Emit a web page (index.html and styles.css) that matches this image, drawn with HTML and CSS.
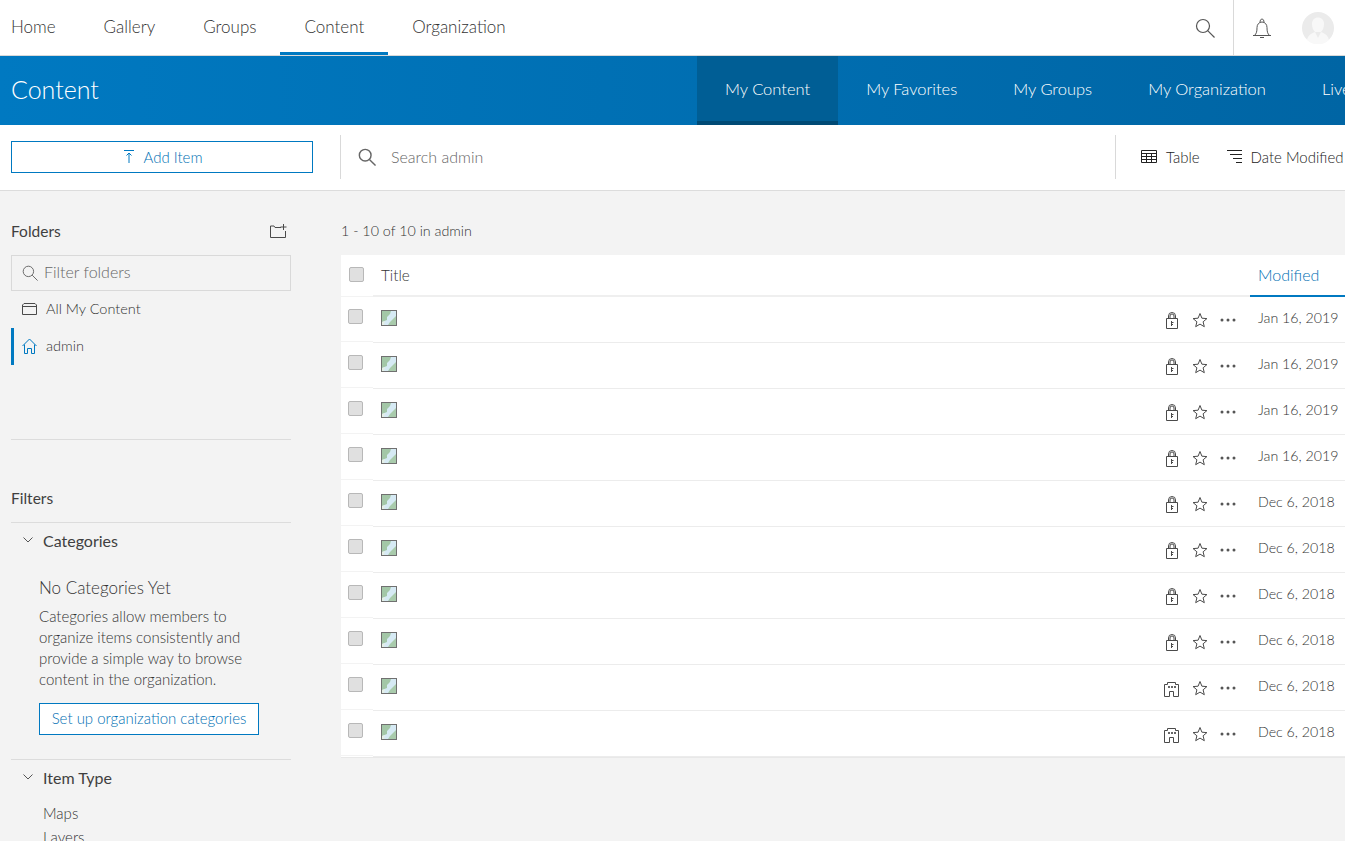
FILE: index.html
```html
<!DOCTYPE HTML>
<html>
<head>
	<title>Content</title>
	<link rel="stylesheet" href="styles.css">
</head>
<body>
	<svg class="defs" width="0" height="0">
		<symbol id="i-lock" viewBox="0 0 14 18"><path d="M4.500 6.500V4a3.500 3.500 0 0 1 7 0v2.500M6 6.500V4a2 2 0 0 1 4 0v2.500M2.500 6.500h11v10h-11zM7.500 9v5M7.500 10.500h2M7.500 12.500h1.500" fill="none" stroke="#4a4a4a"/></symbol>
		<symbol id="i-org" viewBox="0 0 16 15"><path d="M1.500 14.500v-12h3v-2h8v2h3v12h-5v-5h-4v5z" fill="none" stroke="#4a4a4a"/><path d="M5 4h2v2H5zM8 4h2v2H8zM11 4h2v2h-2z" fill="#666"/></symbol>
		<symbol id="i-star" viewBox="0 0 16 16"><path d="M8 1.500l1.900 4.700 5 .4-3.800 3.200 1.200 4.900L8 12.100l-4.300 2.600 1.200-4.900L1.100 6.600l5-.4z" fill="none" stroke="#4a4a4a"/></symbol>
		<symbol id="i-dots" viewBox="0 0 16 4"><circle cx="2" cy="2" r="1.500" fill="#555"/><circle cx="8" cy="2" r="1.500" fill="#555"/><circle cx="14" cy="2" r="1.500" fill="#555"/></symbol>
		<symbol id="i-map" viewBox="0 0 16 16"><rect width="16" height="16" fill="#d6eaf4"/><path d="M1 1h9L9 4 6 7v3l-5 2z" fill="#a3c7a7"/><path d="M15 6l-3 3-3 3-2 3h8z" fill="#a9cbac"/><path d="M1 12l3-1-1 4H1z" fill="#e4efe6"/><rect x=".5" y=".5" width="15" height="15" fill="none" stroke="#707070"/></symbol>
		<symbol id="i-search" viewBox="0 0 20 20"><circle cx="8" cy="8" r="6.500" fill="none" stroke="currentColor"/><path d="M12.700 12.700l6.800 6.800" fill="none" stroke="currentColor"/></symbol>
		<symbol id="i-chev" viewBox="0 0 10 6"><path d="M.5.500L5 5 9.500.500" fill="none" stroke="#555"/></symbol>
	</svg>

	<header class="topnav">
		<nav class="topnav-links">
			<a>Home</a>
			<a>Gallery</a>
			<a>Groups</a>
			<a class="activo">Content</a>
			<a>Organization</a>
		</nav>
		<div class="topnav-tools">
			<svg class="tool-search" width="20" height="20"><use href="#i-search"/></svg>
			<div class="tool-sep"></div>
			<svg class="tool-bell" width="20" height="22" viewBox="0 0 20 22"><path d="M1 18.500h18M2.500 18.500c2-2 2.500-4 2.500-8 0-3 2-5.500 5-5.500s5 2.500 5 5.500c0 4 .5 6 2.500 8M8 5.200C8 3.500 8.800 2 10 2s2 1.500 2 3.200M8 20.500h4" fill="none" stroke="#555"/></svg>
			<svg class="tool-avatar" width="32" height="32" viewBox="0 0 32 32"><circle cx="16" cy="16" r="16" fill="#ebebeb"/><path d="M10 12c0-4 2.500-6.500 6-6.500s6 2.500 6 6.500c0 3-1 6-3 8h-6c-2-2-3-5-3-8z" fill="#f8f8f8"/><path d="M5 28c1-5 5-7 8-8l3 6 3-6c3 1 7 3 8 8a16 16 0 0 1-22 0z" fill="#f8f8f8"/></svg>
		</div>
	</header>

	<div class="banda">
		<h1>Content</h1>
		<nav class="banda-tabs">
			<a class="activo">My Content</a>
			<a>My Favorites</a>
			<a>My Groups</a>
			<a>My Organization</a>
			<a>Live</a>
		</nav>
	</div>

	<div class="toolbar">
		<div class="toolbar-left">
			<button class="btn btn-add">
				<svg width="10" height="13" viewBox="0 0 10 13"><path d="M0 .5h10M5 3v10M2.500 5.500L5 3l2.500 2.500" fill="none" stroke="#0079c1"/></svg>
				Add Item
			</button>
		</div>
		<div class="toolbar-search">
			<svg width="18" height="18"><use href="#i-search"/></svg>
			<span>Search admin</span>
		</div>
		<div class="toolbar-right">
			<span class="tool-item">
				<svg width="16" height="13" viewBox="0 0 16 13"><path d="M.5.500h15v12H.5zM.5 3.500h15M.5 6.500h15M.5 9.500h15M5.500 3.500v9M10.500 3.500v9" fill="none" stroke="#222"/></svg>
				Table
			</span>
			<span class="tool-item">
				<svg width="15" height="13" viewBox="0 0 15 13"><path d="M0 .5h15M3 4.500h12M6 8.500h9M9 12.500h6" fill="none" stroke="#222"/></svg>
				Date Modified
			</span>
		</div>
	</div>

	<div class="contenido">
		<aside class="lateral">
			<div class="folders-head">
				<h2>Folders</h2>
				<svg width="17" height="14" viewBox="0 0 17 14"><path d="M11 3.500H5l-1-1.500H.5v11.500h15V7M13.500 0v6M10.500 3h6" fill="none" stroke="#4a4a4a"/></svg>
			</div>
			<div class="filter-input">
				<svg width="16" height="16"><use href="#i-search"/></svg>
				<span>Filter folders</span>
			</div>
			<div class="folder-row">
				<svg width="15" height="12" viewBox="0 0 15 12"><path d="M.5 11.500V2L2 .5h11L14.500 2v9.500zM.5 3.500h14" fill="none" stroke="#4a4a4a"/></svg>
				All My Content
			</div>
			<div class="folder-row sel">
				<svg width="15" height="16" viewBox="0 0 15 16"><path d="M.5 8L7.500 1l7 7M2.500 6.500v9h3v-5h4v5h3v-9" fill="none" stroke="#0079c1"/></svg>
				admin
			</div>
			<hr class="sep-folders">
			<h2 class="filters-title">Filters</h2>
			<section class="filtro">
				<h3><svg width="10" height="6"><use href="#i-chev"/></svg>Categories</h3>
				<div class="no-cat">
					<h4>No Categories Yet</h4>
					<p>Categories allow members to organize items consistently and provide a simple way to browse content in the organization.</p>
					<button class="btn btn-cat">Set up organization categories</button>
				</div>
			</section>
			<section class="filtro">
				<h3><svg width="10" height="6"><use href="#i-chev"/></svg>Item Type</h3>
				<ul>
					<li>Maps</li>
					<li>Layers</li>
				</ul>
			</section>
		</aside>

		<main class="principal">
			<div class="conteo">1 - 10 of 10 in admin</div>
			<div class="tabla">
				<div class="fila-head">
					<div class="h-check"><span class="check"></span></div>
					<div class="h-resto">
						<span class="col-title">Title</span>
						<span class="col-mod">Modified</span>
					</div>
				</div>
				<div class="fila"><div class="c-check"><span class="check"></span></div><div class="c-resto"><svg class="thumb" width="16" height="16"><use href="#i-map"/></svg><svg class="ic-lock" width="14" height="18"><use href="#i-lock"/></svg><svg class="ic-star" width="16" height="16"><use href="#i-star"/></svg><svg class="ic-dots" width="16" height="4"><use href="#i-dots"/></svg><span class="fecha">Jan 16, 2019</span></div></div>
				<div class="fila"><div class="c-check"><span class="check"></span></div><div class="c-resto"><svg class="thumb" width="16" height="16"><use href="#i-map"/></svg><svg class="ic-lock" width="14" height="18"><use href="#i-lock"/></svg><svg class="ic-star" width="16" height="16"><use href="#i-star"/></svg><svg class="ic-dots" width="16" height="4"><use href="#i-dots"/></svg><span class="fecha">Jan 16, 2019</span></div></div>
				<div class="fila"><div class="c-check"><span class="check"></span></div><div class="c-resto"><svg class="thumb" width="16" height="16"><use href="#i-map"/></svg><svg class="ic-lock" width="14" height="18"><use href="#i-lock"/></svg><svg class="ic-star" width="16" height="16"><use href="#i-star"/></svg><svg class="ic-dots" width="16" height="4"><use href="#i-dots"/></svg><span class="fecha">Jan 16, 2019</span></div></div>
				<div class="fila"><div class="c-check"><span class="check"></span></div><div class="c-resto"><svg class="thumb" width="16" height="16"><use href="#i-map"/></svg><svg class="ic-lock" width="14" height="18"><use href="#i-lock"/></svg><svg class="ic-star" width="16" height="16"><use href="#i-star"/></svg><svg class="ic-dots" width="16" height="4"><use href="#i-dots"/></svg><span class="fecha">Jan 16, 2019</span></div></div>
				<div class="fila"><div class="c-check"><span class="check"></span></div><div class="c-resto"><svg class="thumb" width="16" height="16"><use href="#i-map"/></svg><svg class="ic-lock" width="14" height="18"><use href="#i-lock"/></svg><svg class="ic-star" width="16" height="16"><use href="#i-star"/></svg><svg class="ic-dots" width="16" height="4"><use href="#i-dots"/></svg><span class="fecha">Dec 6, 2018</span></div></div>
				<div class="fila"><div class="c-check"><span class="check"></span></div><div class="c-resto"><svg class="thumb" width="16" height="16"><use href="#i-map"/></svg><svg class="ic-lock" width="14" height="18"><use href="#i-lock"/></svg><svg class="ic-star" width="16" height="16"><use href="#i-star"/></svg><svg class="ic-dots" width="16" height="4"><use href="#i-dots"/></svg><span class="fecha">Dec 6, 2018</span></div></div>
				<div class="fila"><div class="c-check"><span class="check"></span></div><div class="c-resto"><svg class="thumb" width="16" height="16"><use href="#i-map"/></svg><svg class="ic-lock" width="14" height="18"><use href="#i-lock"/></svg><svg class="ic-star" width="16" height="16"><use href="#i-star"/></svg><svg class="ic-dots" width="16" height="4"><use href="#i-dots"/></svg><span class="fecha">Dec 6, 2018</span></div></div>
				<div class="fila"><div class="c-check"><span class="check"></span></div><div class="c-resto"><svg class="thumb" width="16" height="16"><use href="#i-map"/></svg><svg class="ic-lock" width="14" height="18"><use href="#i-lock"/></svg><svg class="ic-star" width="16" height="16"><use href="#i-star"/></svg><svg class="ic-dots" width="16" height="4"><use href="#i-dots"/></svg><span class="fecha">Dec 6, 2018</span></div></div>
				<div class="fila"><div class="c-check"><span class="check"></span></div><div class="c-resto"><svg class="thumb" width="16" height="16"><use href="#i-map"/></svg><svg class="ic-org" width="16" height="15"><use href="#i-org"/></svg><svg class="ic-star" width="16" height="16"><use href="#i-star"/></svg><svg class="ic-dots" width="16" height="4"><use href="#i-dots"/></svg><span class="fecha">Dec 6, 2018</span></div></div>
				<div class="fila"><div class="c-check"><span class="check"></span></div><div class="c-resto"><svg class="thumb" width="16" height="16"><use href="#i-map"/></svg><svg class="ic-org" width="16" height="15"><use href="#i-org"/></svg><svg class="ic-star" width="16" height="16"><use href="#i-star"/></svg><svg class="ic-dots" width="16" height="4"><use href="#i-dots"/></svg><span class="fecha">Dec 6, 2018</span></div></div>
			</div>
		</main>
	</div>
</body>
</html>
```

FILE: styles.css
```css
*, *::after, *::before{
	box-sizing: border-box;
	margin: 0;
	padding: 0;
}
html, body{
	width: 100%;
	height: 100%;
	overflow: hidden;
}
body{
	font-family: "Lato", "Open Sans", sans-serif;
	font-size: 15px;
	font-weight: 300;
	color: #333;
	background-color: #f3f3f3;
}
.defs{
	position: absolute;
}
svg{
	display: block;
	flex: none;
}

/* barra superior */
.topnav{
	display: flex;
	justify-content: space-between;
	height: 56px;
	background-color: #fff;
	border-bottom: 1px solid #d9d9d9;
}
.topnav-links{
	display: flex;
}
.topnav-links a{
	display: flex;
	align-items: center;
	height: 55px;
	padding: 0 24px;
	font-size: 17px;
	color: #333;
	border-bottom: 3px solid transparent;
}
.topnav-links a:first-child{
	padding-left: 11px;
}
.topnav-links a.activo{
	border-bottom-color: #0079c1;
}
.topnav-tools{
	display: flex;
	align-items: center;
	color: #555;
}
.tool-search{
	stroke-width: 1.2;
}
.tool-sep{
	width: 1px;
	height: 55px;
	margin: 0 18px 0 18px;
	background-color: #d9d9d9;
}
.tool-bell{
	margin-right: 30px;
}
.tool-avatar{
	margin-right: 11px;
}

/* banda azul */
.banda{
	display: flex;
	justify-content: space-between;
	height: 69px;
	padding-left: 11px;
	overflow: hidden;
	color: #fff;
	background: linear-gradient(90deg, #0079c1, #0065a4);
}
.banda h1{
	font-size: 25px;
	font-weight: 300;
	line-height: 66px;
}
.banda-tabs{
	display: flex;
	width: 648px;
	flex: none;
}
.banda-tabs a{
	display: flex;
	align-items: center;
	flex: none;
	padding: 0 28px;
	font-size: 16.500px;
	white-space: nowrap;
	border-bottom: 4px solid transparent;
}
.banda-tabs a.activo{
	background-color: #005e95;
	border-bottom-color: #004a75;
}

/* barra de acciones */
.toolbar{
	display: flex;
	align-items: center;
	height: 66px;
	padding-bottom: 2px;
	background-color: #fff;
	border-bottom: 1px solid #dcdcdc;
}
.toolbar-left{
	width: 329px;
	margin-left: 11px;
	flex: none;
}
.btn{
	display: flex;
	align-items: center;
	justify-content: center;
	font-family: inherit;
	font-size: 15px;
	font-weight: 300;
	color: #006fb3;
	background-color: #fff;
	border: 1px solid #0079c1;
}
.btn-add{
	gap: 10px;
	width: 302px;
	height: 32px;
	padding-left: 2px;
}
.toolbar-search{
	display: flex;
	align-items: center;
	flex: 1;
	gap: 15px;
	height: 44px;
	padding-left: 17px;
	font-size: 16px;
	color: #666;
	border-left: 1px solid #d9d9d9;
}
.toolbar-search svg{
	stroke-width: 1.6;
}
.toolbar-right{
	display: flex;
	align-items: center;
	gap: 27px;
	width: 230px;
	height: 44px;
	flex: none;
	padding-left: 25px;
	font-size: 15px;
	color: #222;
	border-left: 1px solid #d9d9d9;
	white-space: nowrap;
}
.tool-item{
	display: flex;
	align-items: center;
	gap: 9px;
}

/* contenido */
.contenido{
	display: flex;
}
.lateral{
	width: 280px;
	margin-left: 11px;
	flex: none;
}
.lateral h2{
	font-size: 15.500px;
	font-weight: 400;
	color: #3f3f3f;
}
.folders-head{
	display: flex;
	align-items: center;
	justify-content: space-between;
	height: 20px;
	margin-top: 30px;
	padding-right: 4px;
}
.filter-input{
	display: flex;
	align-items: center;
	gap: 6px;
	height: 36px;
	margin-top: 14px;
	padding-left: 10px;
	font-size: 16px;
	color: #666;
	border: 1px solid #d9d9d9;
}
.filter-input span{
	margin-top: -3px;
}
.filter-input svg{
	stroke-width: 1.2;
}
.folder-row{
	display: flex;
	align-items: center;
	gap: 9px;
	height: 37px;
	padding: 0 0 2px 11px;
	font-size: 14.500px;
}
.folder-row.sel{
	padding-left: 8px;
	border-left: 3px solid #0079c1;
}
.sep-folders{
	margin-top: 74px;
	border: 0;
	border-top: 1px solid #dcdcdc;
}
.filters-title{
	height: 20px;
	margin-top: 49px;
}
.filtro{
	border-top: 1px solid #dcdcdc;
}
.filters-title + .filtro{
	margin-top: 13px;
}
.filtro h3{
	display: flex;
	align-items: center;
	gap: 10px;
	height: 36px;
	padding: 0 0 2px 12px;
	font-size: 16px;
	font-weight: 400;
	color: #3f3f3f;
}
.no-cat{
	height: 200px;
	padding: 17px 25px 0 28px;
}
.no-cat h4{
	font-size: 17px;
	font-weight: 300;
	line-height: 24px;
}
.no-cat p{
	margin-top: 6px;
	font-size: 15px;
	line-height: 21px;
}
.btn-cat{
	width: 220px;
	height: 32px;
	margin-top: 13px;
	padding-bottom: 2px;
}
.filtro ul{
	padding: 6px 0 0 32px;
	list-style: none;
}
.filtro li{
	line-height: 23.500px;
}

/* tabla */
.principal{
	flex: 1;
	padding-left: 50px;
}
.conteo{
	height: 20px;
	margin-top: 31px;
	font-size: 14.300px;
}
.tabla{
	margin-top: 13px;
	background-color: #fff;
	border-bottom: 1px solid #e8e8e8;
}
.fila-head{
	display: flex;
	height: 42px;
}
.h-check{
	display: flex;
	align-items: center;
	width: 32px;
	flex: none;
	padding: 0 0 2px 8px;
	border-bottom: 1px solid #f3f3f3;
}
.h-resto{
	display: flex;
	align-items: center;
	flex: 1;
	padding: 0 0 1px 8px;
	border-bottom: 2px solid #efefef;
}
.check{
	display: block;
	width: 15px;
	height: 15px;
	flex: none;
	background-color: #e0e0e0;
	border: 1px solid #b8b8b8;
	border-radius: 2px;
}
.col-title{
	font-size: 15.300px;
	color: #333;
}
.col-mod{
	align-self: stretch;
	display: flex;
	align-items: center;
	width: 95px;
	margin: 0 0 -3px auto;
	padding: 0 0 2px 8px;
	font-size: 16px;
	color: #006fb3;
	border-bottom: 2px solid #0079c1;
}
.fila{
	display: flex;
	height: 46px;
}
.c-check{
	width: 32px;
	height: 45px;
	flex: none;
	padding: 12px 0 0 7px;
	border-bottom: 1px solid #f3f3f3;
}
.c-resto{
	display: flex;
	align-items: flex-start;
	flex: 1;
	padding: 13px 0 0 8px;
	border-bottom: 1px solid #ececec;
}
.thumb{
	margin-right: auto;
}
.ic-lock{
	margin: 2px 14px 0 0;
}
.ic-org{
	margin: 4px 13px 0 0;
}
.ic-star{
	margin: 2px 12px 0 0;
}
.ic-dots{
	margin: 8px 22px 0 0;
}
.fecha{
	width: 87px;
	flex: none;
	font-size: 14.200px;
	line-height: 16px;
	white-space: nowrap;
}
```
